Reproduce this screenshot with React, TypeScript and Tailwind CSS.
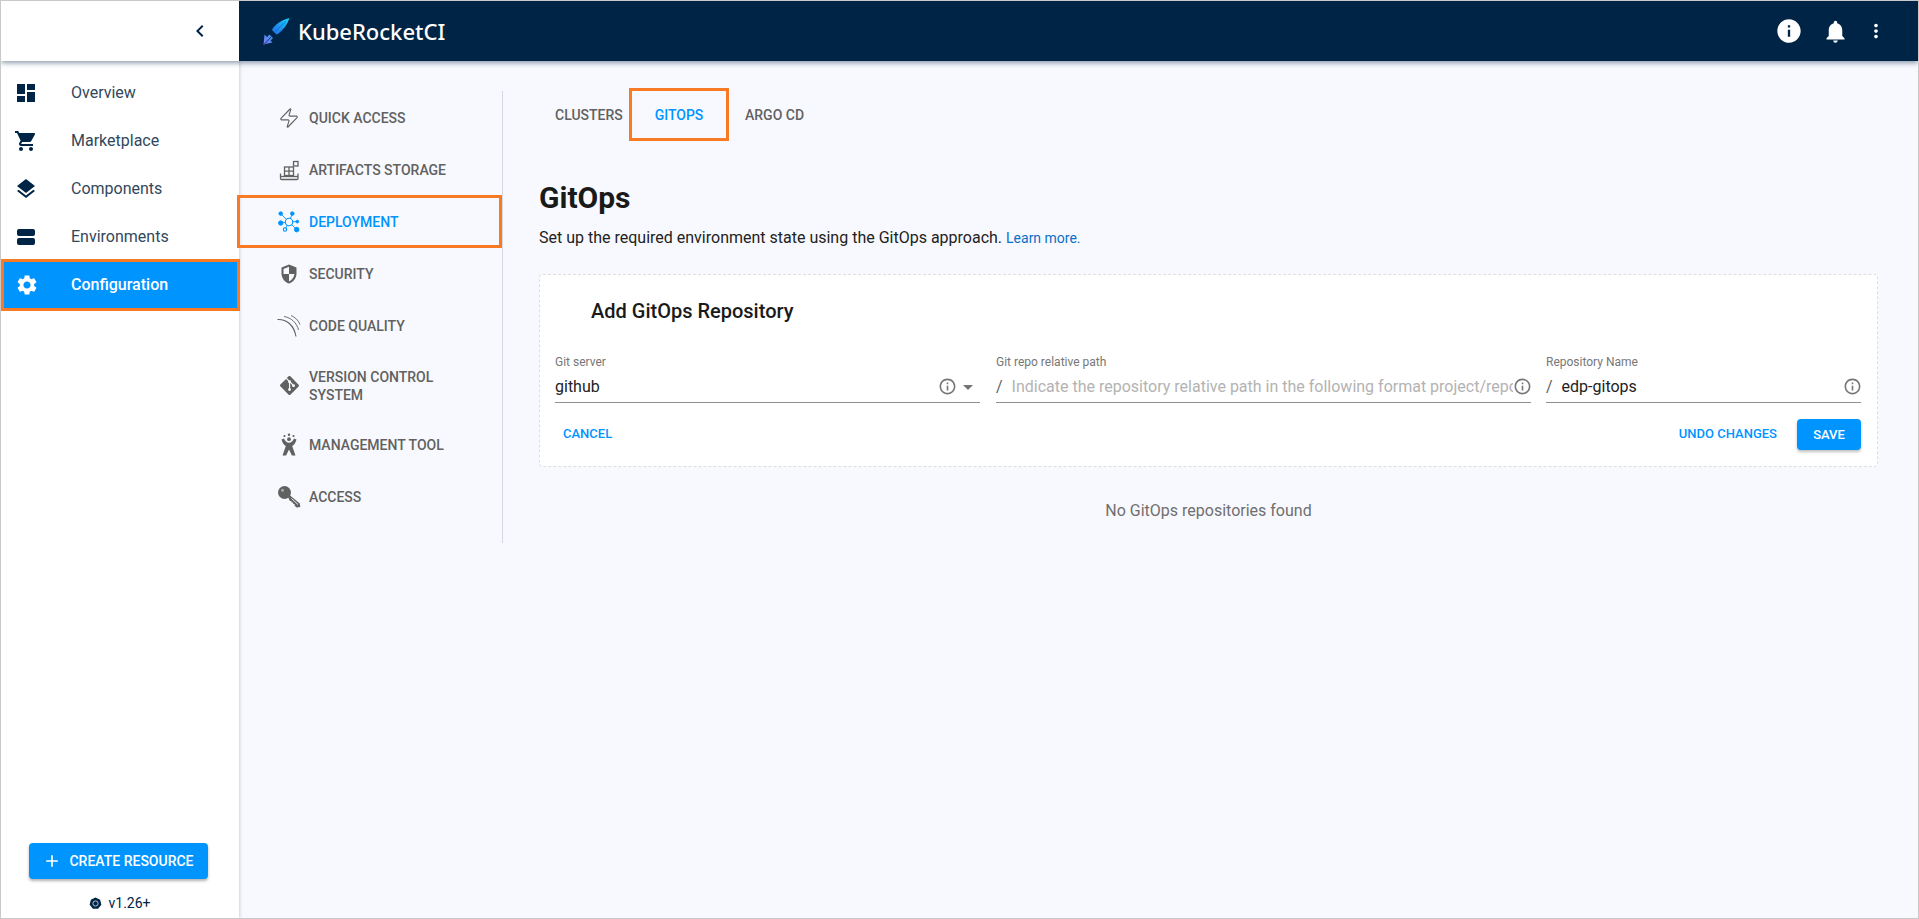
import React from "react";
import { MdDashboard, MdShoppingCart, MdLayers, MdSettings, MdInfo, MdNotifications, MdMoreVert, MdChevronLeft, MdAdd, MdArrowDropDown, MdInfoOutline } from "react-icons/md";
import { SiGit } from "react-icons/si";
import { Zap } from "lucide-react";

const navy = "#002446";
const page = "#f8f9fe";

const EnvIcon = () => (
  <svg width="24" height="24" viewBox="0 0 24 24" fill={navy}>
    <rect x="3" y="4" width="18" height="7" rx="2" />
    <rect x="3" y="13" width="18" height="7" rx="2" />
  </svg>
);

const ArtifactIcon = ({ c }: { c: string }) => (
  <svg width="24" height="24" viewBox="0 0 24 24" fill="none" stroke={c} strokeWidth="1.3">
    <path d="M3.500 15.500v5a1 1 0 0 0 1 1h15.500a1 1 0 0 0 1-1v-5" />
    <path d="M3.500 18.500h17.500" />
    <rect x="7.500" y="9" width="9" height="8.500" />
    <path d="M12 9v8.500M7.500 13.200h9" />
    <rect x="16.500" y="3.500" width="4.500" height="4.500" />
  </svg>
);

const DeployIcon = ({ c }: { c: string }) => (
  <svg width="24" height="24" viewBox="0 0 24 24" fill={c} stroke={c} strokeWidth="0.9">
    <path d="M3.700 3.600 12 12M15.300 3.600 12 12M3.700 13 12 12M20.300 11.600 12 12M8 19.600 12 12M19.700 19.600 12 12" fill="none" />
    <circle cx="12" cy="12" r="3.700" fill={page} strokeWidth="1.100" />
    <circle cx="3.700" cy="3.600" r="1.800" />
    <circle cx="15.300" cy="3.600" r="1.800" />
    <circle cx="3.700" cy="13" r="2.200" />
    <circle cx="20.300" cy="11.600" r="1.400" />
    <circle cx="8" cy="19.600" r="1.700" fill={page} strokeWidth="1.100" />
    <circle cx="19.700" cy="19.600" r="2.300" />
  </svg>
);

const ShieldIcon = ({ c }: { c: string }) => (
  <svg width="24" height="24" viewBox="0 0 24 24" fill={c}>
    <path d="M12 2.500 4.500 5.500v6c0 4.600 3.100 8.700 7.500 10 4.400-1.300 7.500-5.400 7.500-10v-6L12 2.500Zm0 9.500h5.500c-.5 3.500-2.700 6.300-5.500 7.400V12H6.500V6.900L12 4.700V12Z" fillRule="evenodd" />
  </svg>
);

const SonarIcon = ({ c }: { c: string }) => (
  <svg width="24" height="24" viewBox="0 0 24 24" fill="none" stroke={c} strokeWidth="0.9">
    <path d="M0.500 5.500c9-.5 16.500 5.500 18.500 17" strokeWidth="1.100" />
    <path d="M7 2.500c7 1 13 6.500 14.500 13.500" />
    <path d="M14 1.500c4 1.500 7.500 5 9 9" />
  </svg>
);

const JiraIcon = ({ c }: { c: string }) => (
  <svg width="24" height="24" viewBox="0 0 24 24" fill={c}>
    <circle cx="12" cy="1.800" r="1.200" />
    <circle cx="7.500" cy="3" r="1.100" />
    <circle cx="16.500" cy="3" r="1.100" />
    <path d="M4.500 6.500 7 5.500c1 2.600 2.800 4.200 5 4.200s4-1.600 5-4.200l2.500 1c-.7 3-2.300 5.300-4.300 6.600l3.300 9.400h-3.600L12 16.500l-2.900 6H5.500l3.300-9.400c-2-1.300-3.600-3.600-4.300-6.600Z" />
    <circle cx="12" cy="6.200" r="1.900" />
  </svg>
);

const KeyIcon = ({ c }: { c: string }) => (
  <svg width="24" height="24" viewBox="0 0 24 24" fill={c}>
    <circle cx="7.500" cy="7.500" r="6.500" />
    <circle cx="5.500" cy="5.300" r="1.500" fill="#a8a8a8" />
    <path d="M11 12l1.800-1.800 10 8.300.5 3.600-3.800.3-2-2 .2-1.300-1.400-.2-.2-1.400-1.500-.1-.2-1.400-1.500-.1-1.900-3.900Z" />
    <path d="M14.500 13.500l6.500 6" stroke={page} strokeWidth="0.900" fill="none" />
  </svg>
);

const Logo = () => (
  <svg width="28" height="28" viewBox="0 0 28 28">
    <defs>
      <linearGradient id="lg" x1="0.300" y1="0.800" x2="1" y2="0">
        <stop offset="0" stopColor="#1f80ee" />
        <stop offset="1" stopColor="#18d2f7" />
      </linearGradient>
      <linearGradient id="lt" x1="0" y1="1" x2="1" y2="0">
        <stop offset="0" stopColor="#7d78f0" />
        <stop offset="1" stopColor="#3f96f0" />
      </linearGradient>
    </defs>
    <path d="M27.500 1C21 2.500 15 6 11 11l-1 2 4.500 4.500 2-1C21.500 12.500 25.500 7.500 27.500 1Z" fill="url(#lg)" />
    <path d="M24 4.500 13 14.500" stroke="#0b5fb0" strokeWidth="0.600" />
    <path d="M2.500 17.500 5 20l2.500-2.500 3.500 3.500-2.500 2.500 2 2-7 1.500L1.500 28Z" fill="url(#lt)" />
    <path d="M2 27.500 9 20" stroke={navy} strokeWidth="0.800" />
  </svg>
);

const K8s = () => (
  <svg width="13" height="13" viewBox="0 0 14 14">
    <path d="M7 .5l5 2.400 1.300 5.400-3.500 4.400H4.200L.7 8.300 2 2.900Z" fill={navy} />
    <circle cx="7" cy="7" r="2.800" fill="none" stroke="#d8dee8" strokeWidth="0.900" />
  </svg>
);

const mainNav = [
  { label: "Overview", icon: <MdDashboard size={24} color={navy} /> },
  { label: "Marketplace", icon: <MdShoppingCart size={24} color={navy} /> },
  { label: "Components", icon: <MdLayers size={24} color={navy} /> },
  { label: "Environments", icon: <EnvIcon /> },
];

const grey = "#616161";
const blue = "#0094ff";

const subNav = [
  { label: "QUICK ACCESS", icon: <Zap size={22} color={grey} strokeWidth={1.25} />, h: "h-[52px]" },
  { label: "ARTIFACTS STORAGE", icon: <ArtifactIcon c={grey} />, h: "h-[52px]" },
  { label: "DEPLOYMENT", icon: <DeployIcon c={blue} />, h: "h-[53px]", active: true },
  { label: "SECURITY", icon: <ShieldIcon c={grey} />, h: "h-[52px]" },
  { label: "CODE QUALITY", icon: <SonarIcon c={grey} />, h: "h-[52px]" },
  { label: "VERSION CONTROL SYSTEM", icon: <SiGit size={19} color={grey} />, h: "h-[67px]" },
  { label: "MANAGEMENT TOOL", icon: <JiraIcon c={grey} />, h: "h-[52px]" },
  { label: "ACCESS", icon: <KeyIcon c={grey} />, h: "h-[52px]" },
];

const Field = ({ label, width, children }: { label: string; width: string; children: React.ReactNode }) => (
  <div className={`flex flex-col ${width}`}>
    <span className="text-[12px] leading-[16px] text-[#777777]">{label}</span>
    <div className="mt-[1px] flex h-[32px] items-center border-b border-[#8f8f8f] text-[16px]">{children}</div>
  </div>
);

export default function App() {
  return (
    <div className="flex h-[919px] w-[1919px] flex-col overflow-hidden border border-[#c9c9c9] bg-[#f8f9fe] font-['Roboto',sans-serif]">
      <header className="relative z-10 flex h-[60px] shrink-0 shadow-[0_2px_5px_rgba(0,36,70,0.45)]">
        <div className="flex w-[238px] items-center justify-end bg-white pr-[27px]">
          <MdChevronLeft size={24} color={navy} />
        </div>
        <div className="flex flex-1 items-center bg-[#002446] pl-[23px] pr-[31px]">
          <Logo />
          <span className="ml-[8px] font-['Noto_Sans',sans-serif] text-[22px] font-medium text-white">KubeRocketCI</span>
          <div className="ml-auto flex items-center">
            <MdInfo size={28} color="white" />
            <MdNotifications size={27} color="white" className="ml-[19px]" />
            <MdMoreVert size={22} color="white" className="ml-[16px]" />
          </div>
        </div>
      </header>
      <div className="flex min-h-0 flex-1">
        <aside className="flex w-[238px] shrink-0 flex-col bg-white pt-[8px] shadow-[1px_0_3px_rgba(0,0,0,0.16)]">
          {mainNav.map((n) => (
            <div key={n.label} className="flex h-[48px] items-center pl-[13px]">
              <span className="flex w-[24px] justify-center">{n.icon}</span>
              <span className="ml-[33px] text-[16px] text-[#32475c]">{n.label}</span>
            </div>
          ))}
          <div className="relative z-10 mt-[-2px] flex h-[52px] w-[239px] items-center border-[3px] border-[#f97a25] bg-[#0094ff] pl-[11px]">
            <MdSettings size={24} color="white" />
            <span className="ml-[32px] text-[16px] font-medium text-white">Configuration</span>
          </div>
          <div className="mt-auto flex flex-col items-center pb-[7px]">
            <button className="mr-[4px] flex h-[36px] w-[179px] items-center justify-center gap-[7px] rounded-[4px] bg-[#0094ff] text-[14px] font-medium text-white shadow-[0_2px_3px_rgba(0,0,0,0.3)]">
              <MdAdd size={20} />
              <span>CREATE RESOURCE</span>
            </button>
            <div className="mt-[16px] flex h-[16px] items-center gap-[6px] text-[14px] text-[#002446]">
              <K8s />
              <span>v1.26+</span>
            </div>
          </div>
        </aside>
        <main className="flex min-w-0 flex-1 pt-[30px]">
          <nav className="flex h-[452px] w-[264px] shrink-0 flex-col border-r border-[#d5d8de] pt-[1px]">
            {subNav.map((s) =>
              s.active ? (
                <div key={s.label} className={`relative z-20 ml-[-2px] mt-[-1px] flex ${s.h} items-center border-[3px] border-[#f97a25] pl-[37px]`}>
                  <span className="flex w-[24px] justify-center">{s.icon}</span>
                  <span className="ml-[8px] w-[160px] text-[14px] leading-[18px] font-medium text-[#0094ff]">{s.label}</span>
                </div>
              ) : (
                <div key={s.label} className={`flex ${s.h} items-center pl-[38px]`}>
                  <span className="flex w-[24px] justify-center">{s.icon}</span>
                  <span className="ml-[8px] w-[160px] text-[14px] leading-[18px] font-medium text-[#616161]">{s.label}</span>
                </div>
              )
            )}
          </nav>
          <section className="min-w-0 flex-1 pl-[36px] pr-[40px]">
            <div className="mt-[-3px] flex h-[53px] items-center text-[14px] font-medium text-[#616161]">
              <span className="flex h-[53px] w-[90px] items-center pl-[16px] pt-[2px]">CLUSTERS</span>
              <span className="flex h-[53px] w-[100px] items-center justify-center border-[3px] border-[#f97a25] pt-[2px] text-[#0094ff]">GITOPS</span>
              <span className="ml-[16px] flex h-[53px] items-center pt-[2px]">ARGO CD</span>
            </div>
            <h1 className="mt-[39px] text-[30px] leading-[36px] font-bold text-[#1a1a1a]">GitOps</h1>
            <p className="mt-[12px] text-[16px] leading-[20px] text-[#222222]">
              Set up the required environment state using the GitOps approach. <span className="text-[14px] text-[#0a6fc9]">Learn more.</span>
            </p>
            <div className="mt-[26px] h-[193px] rounded-[4px] border border-dashed border-[#dedede] bg-white pl-[15px] pr-[16px] pt-[20px]">
              <h2 className="ml-[36px] text-[20px] leading-[32px] font-medium text-[#1a1a1a]">Add GitOps Repository</h2>
              <div className="mt-[27px] flex gap-[16px]">
                <Field label="Git server" width="w-[425px]">
                  <span className="flex-1 text-[#222222]">github</span>
                  <MdInfoOutline size={19} color="#757575" />
                  <MdArrowDropDown size={24} color="#757575" className="ml-[-1px]" />
                </Field>
                <Field label="Git repo relative path" width="w-[535px]">
                  <span className="mr-[9px] text-[#616161]">/</span>
                  <span className="min-w-0 flex-1 overflow-hidden whitespace-nowrap text-[#b3b3b3]">Indicate the repository relative path in the following format project/repository</span>
                  <MdInfoOutline size={19} color="#757575" className="mr-[-1px]" />
                </Field>
                <div className="ml-[-1px]">
                  <Field label="Repository Name" width="w-[315px]">
                    <span className="mr-[9px] text-[#616161]">/</span>
                    <span className="flex-1 text-[#222222]">edp-gitops</span>
                    <MdInfoOutline size={19} color="#757575" className="mr-[-1px]" />
                  </Field>
                </div>
              </div>
              <div className="mt-[16px] flex items-center text-[13px] font-medium text-[#0094ff]">
                <span className="ml-[8px] pb-[2px]">CANCEL</span>
                <span className="ml-auto pb-[2px]">UNDO CHANGES</span>
                <button className="ml-[20px] h-[31px] w-[64px] rounded-[4px] bg-[#0094ff] text-white shadow-[0_2px_3px_rgba(0,0,0,0.25)]">SAVE</button>
              </div>
            </div>
            <p className="mt-[32px] text-center text-[16px] leading-[24px] text-[#6f6f6f]">No GitOps repositories found</p>
          </section>
        </main>
      </div>
    </div>
  );
}
